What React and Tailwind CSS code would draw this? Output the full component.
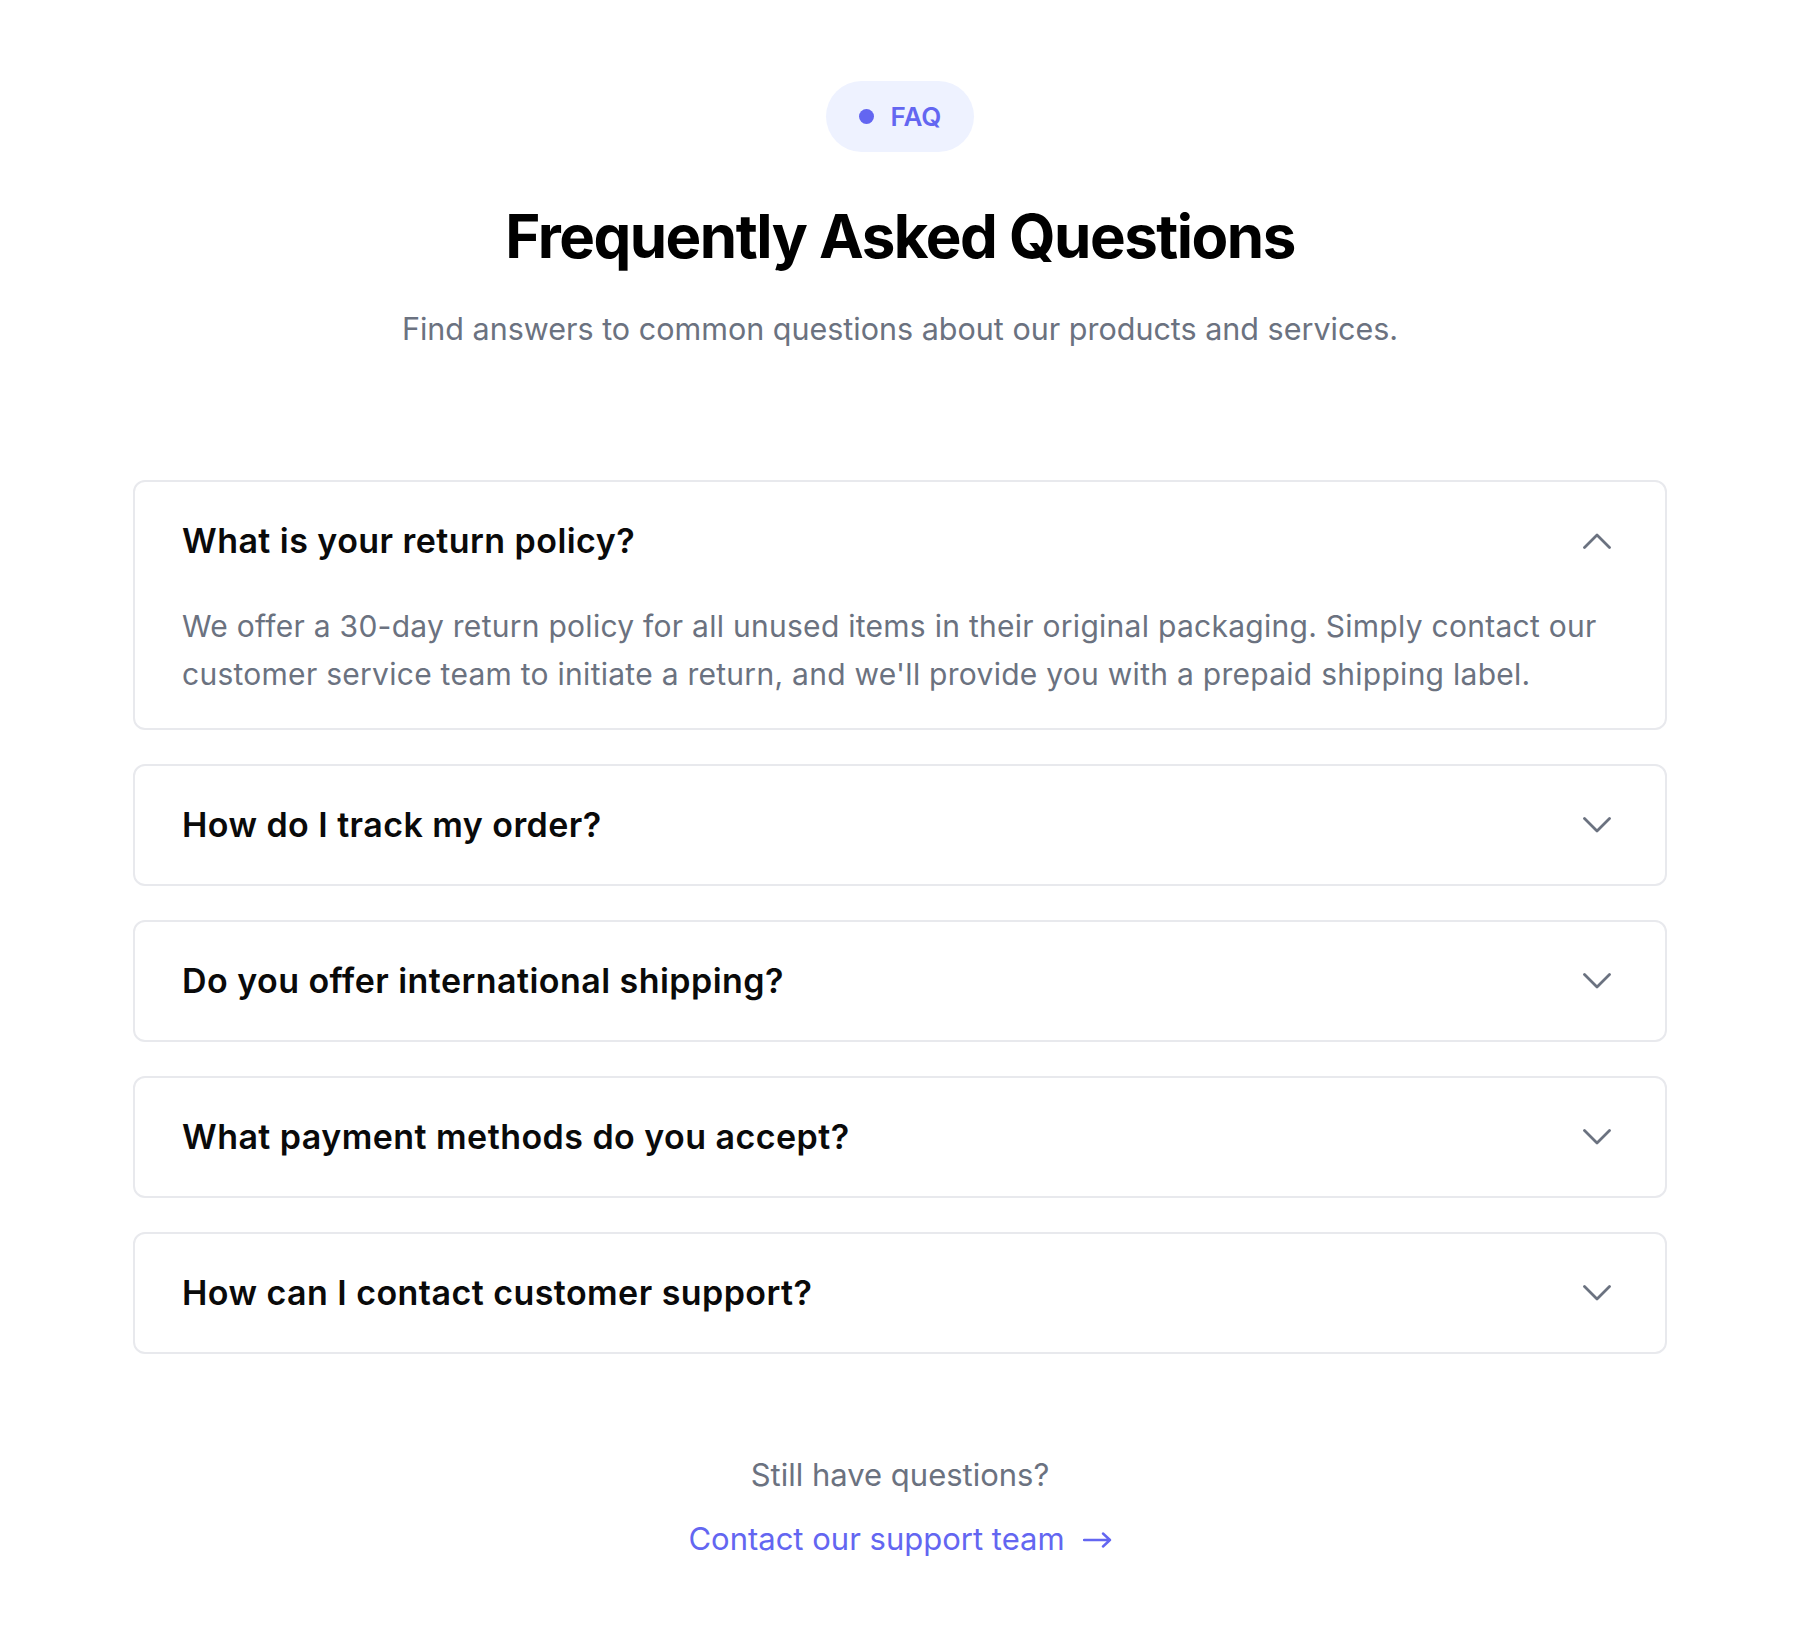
import { useState } from 'react';

const faqs = [
  {
    q: 'What is your return policy?',
    a: "We offer a 30-day return policy for all unused items in their original packaging. Simply contact our customer service team to initiate a return, and we'll provide you with a prepaid shipping label.",
  },
  {
    q: 'How do I track my order?',
    a: "Once your order ships, you'll receive an email with a tracking number and a link to follow your package.",
  },
  {
    q: 'Do you offer international shipping?',
    a: 'Yes, we ship to most countries worldwide. Shipping costs and delivery times vary by destination.',
  },
  {
    q: 'What payment methods do you accept?',
    a: 'We accept all major credit cards, PayPal, Apple Pay and Google Pay.',
  },
  {
    q: 'How can I contact customer support?',
    a: 'You can reach our support team by email or live chat, Monday through Friday.',
  },
];

function Chevron({ up }) {
  return (
    <svg width="28" height="16" viewBox="0 0 28 16" fill="none" className="shrink-0">
      <path
        d={up ? 'M1.5 14.5L14 2L26.5 14.5' : 'M1.5 1.5L14 14L26.5 1.5'}
        stroke="#6b7280"
        strokeWidth="2.8"
        strokeLinecap="round"
        strokeLinejoin="round"
      />
    </svg>
  );
}

export default function App() {
  const [open, setOpen] = useState(0);

  return (
    <div className="min-h-screen bg-white font-['Inter',sans-serif] pr-[8px]">
      <div className="max-w-[1534px] mx-auto pt-[81px] pb-[63px] flex flex-col items-center">
        <div className="h-[71px] px-[33px] rounded-full bg-[#eef2ff] flex items-center gap-[17px]">
          <span className="w-[15px] h-[15px] rounded-full bg-[#6366f1]" />
          <span className="text-[26px] leading-[32px] font-semibold text-[#6366f1]">FAQ</span>
        </div>

        <h1 className="mt-[48px] text-[60px] leading-[72px] font-bold tracking-tight text-black">
          Frequently Asked Questions
        </h1>
        <p className="mt-[34px] text-[30.5px] leading-[45px] text-[#6b7280]">
          Find answers to common questions about our products and services.
        </p>

        <div className="mt-[129px] w-full flex flex-col gap-[34px]">
          {faqs.map((f, i) => (
            <div key={i} className="border-2 border-[#e8e9ed] rounded-[12px] bg-white">
              <button
                onClick={() => setOpen(open === i ? -1 : i)}
                className="w-full flex items-center justify-between px-[47px] py-[39px] text-left"
              >
                <span className="text-[34px] leading-[40px] font-semibold tracking-[0.45px] text-[#0a0a0a]">{f.q}</span>
                <span className="w-[43px] flex justify-center">
                  <Chevron up={open === i} />
                </span>
              </button>
              {open === i && (
                <div className="px-[47px] pt-[2px] pb-[30px] text-[30px] leading-[48px] tracking-[0.27px] text-[#6b7280]">
                  {f.a}
                </div>
              )}
            </div>
          ))}
        </div>

        <p className="mt-[98px] text-[31px] leading-[46px] text-[#6b7280]">Still have questions?</p>
        <a href="#" className="mt-[18px] text-[31px] leading-[46px] text-[#6366f1] flex items-center gap-[18px]">
          Contact our support team
          <svg width="29" height="16" viewBox="0 0 29 16" fill="none" className="mt-[2px]">
            <path d="M1 8H27M20 1.5L27 8L20 14.5" stroke="#6366f1" strokeWidth="2.4" strokeLinecap="round" strokeLinejoin="round" />
          </svg>
        </a>
      </div>
    </div>
  );
}
